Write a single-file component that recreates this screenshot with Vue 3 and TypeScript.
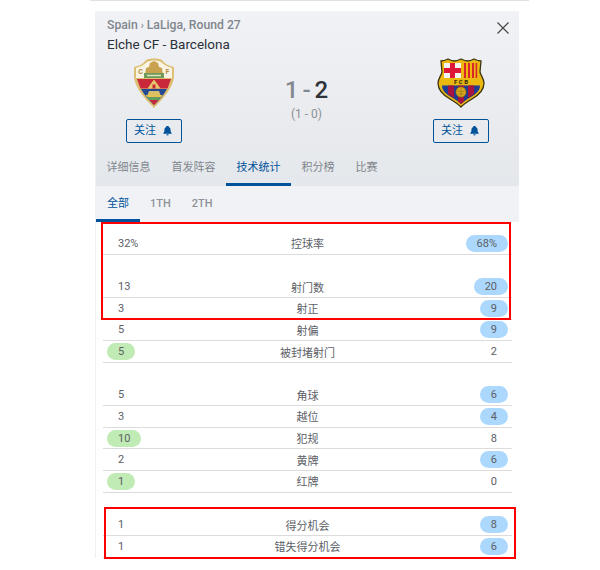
<script setup lang="ts">
interface Row { l: string; n: string; r: string; win: 'l' | 'r' | '' }
const groups: Row[][] = [
  [{ l: '32%', n: '控球率', r: '68%', win: 'r' }],
  [
    { l: '13', n: '射门数', r: '20', win: 'r' },
    { l: '3', n: '射正', r: '9', win: 'r' },
    { l: '5', n: '射偏', r: '9', win: 'r' },
    { l: '5', n: '被封堵射门', r: '2', win: 'l' },
  ],
  [
    { l: '5', n: '角球', r: '6', win: 'r' },
    { l: '3', n: '越位', r: '4', win: 'r' },
    { l: '10', n: '犯规', r: '8', win: 'l' },
    { l: '2', n: '黄牌', r: '6', win: 'r' },
    { l: '1', n: '红牌', r: '0', win: 'l' },
  ],
  [
    { l: '1', n: '得分机会', r: '8', win: 'r' },
    { l: '1', n: '错失得分机会', r: '6', win: 'r' },
  ],
]
const tabs = ['详细信息', '首发阵容', '技术统计', '积分榜', '比赛']
</script>

<template>
  <div class="page">
    <div class="topline"></div>
    <div class="panel">
      <header class="head">
        <div class="crumb">Spain <span class="sep">›</span> LaLiga, Round 27</div>
        <div class="title">Elche CF - Barcelona</div>
        <svg class="close" viewBox="0 0 12 12" width="12" height="12"><path d="M.5.5l11 11M11.5.5l-11 11" stroke="#444" stroke-width="1.1" fill="none" /></svg>
        <div class="match">
          <div class="team">
            <svg class="crest" viewBox="0 0 42 50" width="42" height="50">
              <path d="M1 9 C6 8 10 6 13 2 C17 0 25 0 29 2 C32 6 36 8 41 9 V17 C41 25 37 34 21 50 C5 34 1 25 1 17Z" fill="#dcbf72" />
              <path d="M3 10 C7 9 11 7 14 4 C18 2 24 2 28 4 C31 7 35 9 39 10 V20 H3Z" fill="#f8f3e3" />
              <path d="M17 5l4-2 4 2 1 4 3 1 1 7H12l1-7 3-1z" fill="#c8a24e" />
              <rect x="11" y="15" width="20" height="5" fill="#6f9a58" />
              <rect x="14" y="16.800" width="14" height="1.400" fill="#dfe6c8" />
              <path d="M4 21H38L34.500 30.500H7.500z" fill="#c9273a" />
              <path d="M21 21.500l3 4 3.500 5H14.500l3.500-5z" fill="#e6c56a" />
              <path d="M19.500 26.500h3v4h-3z" fill="#c9273a" />
              <path d="M8 31H34C31 37 26 42 21 47 16 42 11 37 8 31z" fill="#244a96" />
              <path d="M16 33h10l1.500 4h-13z" fill="#d8c06a" />
              <path d="M12.500 37H29.500L28 39.500H14.500z" fill="#e2c44e" />
              <path d="M14.500 39.500H27.500L25.500 42H16.500z" fill="#5aa35c" />
              <path d="M16.500 42H25.500L21 47z" fill="#c9273a" />
              <text x="7.500" y="16" class="cl">C</text>
              <text x="34.500" y="16" class="cl">F</text>
            </svg>
            <button class="follow">关注
              <svg viewBox="0 0 10 11" width="9" height="10"><path d="M5 0C3.800 0 3.300.7 3.200 1.400 2 1.900 1.600 3 1.600 4.300c0 2-.6 2.900-1.300 3.500v.7h9.400v-.7C9 7.200 8.400 6.300 8.400 4.300c0-1.300-.4-2.400-1.600-2.900C6.700.7 6.200 0 5 0zM3.700 9.200a1.300 1.300 0 0 0 2.600 0z" fill="#00529b" /></svg>
            </button>
          </div>
          <div class="score">
            <div class="ft"><span class="lo">1</span> <span class="lo">-</span> 2</div>
            <div class="ht">(1 - 0)</div>
          </div>
          <div class="team">
            <svg class="crest" viewBox="0 0 48 50" width="48" height="50">
              <path d="M4 3 C7 3 9 2 11 1 C13 2 15 3 17 3 C19 3 22 2 24 1 C26 2 29 3 31 3 C33 3 35 2 37 1 C39 2 41 3 44 3 L43 14 C44 18 47 21 47 25 C47 32 42 37 35 41 C30 44 27 46 24 49 C21 46 18 44 13 41 C6 37 1 32 1 25 C1 21 4 18 5 14Z" fill="#eab80f" stroke="#3d3310" stroke-width="1.300" />
              <rect x="7" y="5" width="17" height="15" fill="#f3f3f3" />
              <path d="M13 5h5v15h-5zM7 10h17v5H7z" fill="#de1738" />
              <rect x="25" y="5" width="16" height="15" fill="#eeb80e" />
              <path d="M27 5h2v15h-2zM31 5h2v15h-2zM35 5h2v15h-2zM38.600 5h1.600v15h-1.600z" fill="#d9252c" />
              <text x="24" y="26" class="fcb">F C B</text>
              <path d="M5 27.500H43C43 33 39 36 33 39.500 29 42 26 44 24 46 22 44 19 42 15 39.500 9 36 5 33 5 27.500Z" fill="#1f3c93" />
              <path d="M11 27.500h6v12.500l-6-4zM21 27.500h6v16l-3 2.500-3-2.500zM31 27.500h6v8.500l-6 4z" fill="#a8123f" />
              <circle cx="24" cy="34" r="5.200" fill="#d8a81c" stroke="#7a5a10" stroke-width=".6" />
              <path d="M20 32.500c2.500 1.500 5.500 1.500 8 0M21 36.500c2-1 4-1 6 0M24 29v10" stroke="#8a6a18" stroke-width=".5" fill="none" />
            </svg>
            <button class="follow">关注
              <svg viewBox="0 0 10 11" width="9" height="10"><path d="M5 0C3.800 0 3.300.7 3.200 1.400 2 1.900 1.600 3 1.600 4.300c0 2-.6 2.900-1.300 3.500v.7h9.400v-.7C9 7.200 8.400 6.300 8.400 4.300c0-1.300-.4-2.400-1.600-2.900C6.700.7 6.200 0 5 0zM3.700 9.200a1.300 1.300 0 0 0 2.600 0z" fill="#00529b" /></svg>
            </button>
          </div>
        </div>
        <nav class="tabs">
          <span v-for="t in tabs" :key="t" class="tab" :class="{ on: t === '技术统计' }">{{ t }}</span>
        </nav>
      </header>
      <nav class="sub">
        <span class="st on">全部</span><span class="st">1TH</span><span class="st">2TH</span>
      </nav>
      <section class="stats">
        <div v-for="(g, i) in groups" :key="i" class="group">
          <div v-for="row in g" :key="row.n" class="row">
            <div class="val"><span :class="{ pill: true, lw: row.win === 'l' }">{{ row.l }}</span></div>
            <div class="name">{{ row.n }}</div>
            <div class="val right"><span :class="{ pill: true, rw: row.win === 'r' }">{{ row.r }}</span></div>
          </div>
        </div>
      </section>
    </div>
    <div class="mark m1"></div>
    <div class="mark m2"></div>
  </div>
</template>

<style>
body { margin: 0; background: #fff; }
</style>

<style scoped>
.page {
  position: relative;
  width: 600px;
  height: 570px;
  overflow: hidden;
  font-family: Roboto, "Noto Sans CJK SC", sans-serif;
  color: #4b4f56;
}
.topline { height: 1px; margin: 0 71px 10px 90px; background: #dfe1e4; }
.panel { width: 424px; margin-left: 95px; border-left: 1px solid #f0f0f0; box-sizing: border-box; }
.head {
  position: relative;
  height: 175px;
  padding: 7px 0 0 11px;
  box-sizing: border-box;
  background: linear-gradient(#f1f2f5, #e4e7eb);
  display: flex;
  flex-direction: column;
}
.crumb { font-size: 12.200px; line-height: 14px; font-weight: 500; color: #80868d; }
.sep { font-size: 10px; }
.title { margin-top: 4px; line-height: 14px; font-weight: 400; color: #2c3038; font-size: 13.500px; }
.close { position: absolute; right: 10px; top: 11px; }
.match { position: relative; height: 93px; margin: 7px 0 0 -11px; }
.team { position: absolute; top: 0; width: 100px; display: flex; flex-direction: column; align-items: center; }
.team:first-child { left: 8px; }
.team:last-child { left: 315px; }
.crest { height: 50px; }
.cl { font: 700 7px Roboto, sans-serif; fill: #b08a3a; text-anchor: middle; }
.fcb { font: 700 6px Roboto, sans-serif; fill: #2a2410; text-anchor: middle; }
.follow {
  margin-top: 11px;
  width: 56px;
  height: 24px;
  padding: 0 2px 0 0;
  border: 1px solid #00529b;
  border-radius: 2px;
  background: transparent;
  color: #00529b;
  font: 400 11px/22px Roboto, "Noto Sans CJK SC", sans-serif;
  display: flex;
  align-items: center;
  justify-content: center;
  gap: 7px;
}
.score { position: absolute; left: 0; right: 2px; top: 19px; text-align: center; }
.ft { font-size: 24px; line-height: 26px; font-weight: 500; color: #2f3339; word-spacing: -2px; }
.lo { color: #83888e; }
.ht { font-size: 12px; line-height: 14px; margin-top: 4px; color: #8b9095; }
.tabs { display: flex; margin: 8px 0 0 -11px; height: 35px; }
.tab {
  height: 32px;
  padding: 0 10.500px;
  font-size: 11px;
  line-height: 34px;
  color: #80868d;
  border-bottom: 3px solid transparent;
  white-space: nowrap;
}
.tab.on { color: #00529b; border-bottom-color: #00529b; }
.sub { display: flex; height: 36px; background: #f0f2f6; }
.st {
  padding: 0 11px;
  font-size: 11px;
  font-weight: 500;
  line-height: 36px;
  height: 33px;
  color: #8f9398;
  margin-right: -1px;
  border-bottom: 3px solid transparent;
}
.st.on { color: #00529b; border-bottom-color: #00529b; font-weight: 400; margin-right: -1px; }
.stats { padding: 11px 7px 0 7px; }
.group + .group { margin-top: 21.650px; }
.row {
  display: grid;
  grid-template-columns: 1fr 2fr 1fr;
  align-items: center;
  height: 21.650px;
  box-sizing: border-box;
  border-bottom: 1px solid #dcdcdc;
  font-size: 11px;
  color: #5c6066;
}
.name { text-align: center; }
.val { display: flex; }
.val.right { justify-content: flex-end; }
.pill {
  height: 17px;
  line-height: 17px;
  padding: 0 11px;
  border-radius: 9px;
  text-align: center;
  margin: 0 0 0 4px;
}
.right .pill { margin: 0 4px 0 0; }
.lw { background: #c1ebb4; }
.rw { background: #acd8fd; }
.mark { position: absolute; border: 2px solid #ff0000; box-sizing: border-box; }
.m1 { left: 101px; top: 222px; width: 410px; height: 98px; }
.m2 { left: 104px; top: 507px; width: 412px; height: 52px; }
</style>
